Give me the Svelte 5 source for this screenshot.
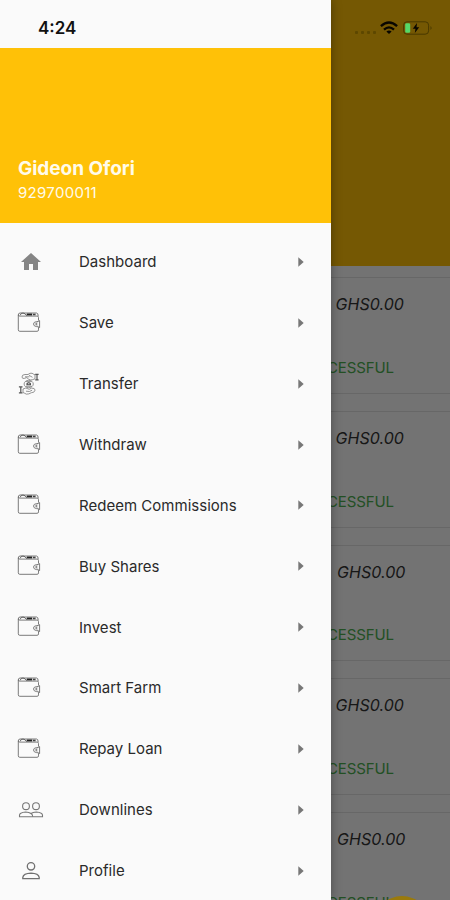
<script lang="ts">
	interface MenuItem {
		label: string;
		icon: 'home' | 'wallet' | 'transfer' | 'people' | 'person';
	}

	const user = { name: 'Gideon Ofori', phone: '929700011' };

	const items: MenuItem[] = [
		{ label: 'Dashboard', icon: 'home' },
		{ label: 'Save', icon: 'wallet' },
		{ label: 'Transfer', icon: 'transfer' },
		{ label: 'Withdraw', icon: 'wallet' },
		{ label: 'Redeem Commissions', icon: 'wallet' },
		{ label: 'Buy Shares', icon: 'wallet' },
		{ label: 'Invest', icon: 'wallet' },
		{ label: 'Smart Farm', icon: 'wallet' },
		{ label: 'Repay Loan', icon: 'wallet' },
		{ label: 'Downlines', icon: 'people' },
		{ label: 'Profile', icon: 'person' }
	];

	const transactions = [
		{ amount: 'GHS0.00', status: 'SUCCESSFUL', wide: false },
		{ amount: 'GHS0.00', status: 'SUCCESSFUL', wide: false },
		{ amount: 'GHS0.00', status: 'SUCCESSFUL', wide: true },
		{ amount: 'GHS0.00', status: 'SUCCESSFUL', wide: false },
		{ amount: 'GHS0.00', status: 'SUCCESSFUL', wide: true }
	];
</script>

<div class="screen">
	<main class="page">
		<div class="hero"></div>
		<div class="transactions">
			{#each transactions as tx}
				<div class="transaction">
					<span class="amount" class:wide={tx.wide}>{tx.amount}</span>
					<span class="status">{tx.status}</span>
				</div>
			{/each}
		</div>
	</main>

	<div class="scrim"></div>
	<div class="fab"></div>

	<aside class="drawer">
		<div class="drawer-header">
			<h2 class="user-name">{user.name}</h2>
			<p class="user-phone">{user.phone}</p>
		</div>
		<nav class="menu">
			{#each items as item}
				<div class="menu-item">
					<span class="icon">
						{#if item.icon === 'home'}
							<svg class="home" width="24" height="24" viewBox="0 0 24 24">
								<path d="M10 20v-6h4v6h5v-8h3L12 3 2 12h3v8z" fill="#858585" />
							</svg>
						{:else if item.icon === 'wallet'}
							<svg class="wallet" width="26" height="24" viewBox="0 0 26 24" fill="none" stroke="#6c6c6c" stroke-width="0.9">
								<path d="M21.5 9.6V6.5q0-1.4-1.4-1.4H2.5Q1.3 5.1 1.3 3.9V18.8q0 1.5 1.5 1.5h17.3q1.4 0 1.4-1.4v-2.7" />
								<path d="M1.3 4.2Q1.3 2 3 2h16.6q1.6 0 1.6 3.2" />
								<path d="M3 4.4Q4.2 1 7 2.2l3 2.4" stroke="#555" />
								<path d="M9.8 3.5h5.4" stroke="#222" stroke-width="1.9" />
								<path d="M16 3.5h2.6" stroke="#444" stroke-width="1.6" />
								<path d="M22.6 9.6q-1 1.1-3 1-3 .3-3.1 2.4.1 2.3 3.1 2.6 2-.1 3 1z" fill="#fafafa" />
								<path d="M20.4 12q-1.6-.2-1.6 1t1.6 1" stroke="#555" />
							</svg>
						{:else if item.icon === 'transfer'}
							<svg class="transfer" width="24" height="24" viewBox="0 0 24 24" fill="none" stroke="#7a7a7a" stroke-width="0.8">
								<path d="M5 5q0-2.5 3-2.5h3l2-1.2q2.2-.6 3.8 1l1.2.5v4l-2.8 1q-2 .7-3.8-.8l-1.6-1.4-2.6.8Q5.3 7 5 5z" />
								<path d="M8 4.8h4.5M12 3.3l3.5 2" />
								<path d="M18.2 2.3h3.4M20 2.3v5.6M18.2 7.9h3.4" stroke="#555" stroke-width="1.2" />
								<ellipse cx="11.7" cy="12" rx="4.6" ry="3.7" />
								<path d="M8.5 9.6h6M8.8 14.3h6" />
								<path d="M10 12.8v-1.2q1.7-1.8 3.4 0v1.2z" stroke="#444" stroke-width="1.1" />
								<path d="M6 17l2.8-1 3.4 1.3 2.4-1.2q3.3-.2 3.5 2-.7 2.8-3.7 2.6l-2.6 1.2q-2.8.8-4.3-.7L6 20.5z" />
								<path d="M9 19.2l3.4.3 2.7-1.3" />
								<path d="M1.9 14.8h3.6M3.8 14.8v6M1.9 20.8h3.6" stroke="#555" stroke-width="1.2" />
							</svg>
						{:else if item.icon === 'people'}
							<svg class="people" width="26" height="24" viewBox="0 0 26 24" fill="none" stroke="#777" stroke-width="1.1">
								<circle cx="8" cy="8.2" r="3.4" />
								<circle cx="18" cy="8.2" r="3.4" />
								<path d="M1.5 18.7v-1.5q0-2.7 6.2-3.2 3.5.2 5.3 1.5 1.8-1.3 5.3-1.5 6.2.5 6.2 3.2v1.5z" />
								<path d="M13 15.5q1.7.8 1.7 3.2" />
							</svg>
						{:else}
							<svg class="person" width="24" height="24" viewBox="0 0 24 24" fill="none" stroke="#707070" stroke-width="1.3">
								<circle cx="12" cy="7.3" r="3.7" />
								<path d="M3.8 19.6v-1.2q.6-4 8.2-4.3 7.6.3 8.2 4.3v1.2z" />
							</svg>
						{/if}
					</span>
					<span class="label">{item.label}</span>
					<svg class="arrow" width="6" height="10" viewBox="0 0 6 10">
						<path d="M.3.3 5.7 5 .3 9.7z" fill="#777" />
					</svg>
				</div>
			{/each}
		</nav>
	</aside>

	<header class="status-bar">
		<span class="time">4:24</span>
		<span class="indicators">
			<span class="signal"><i></i><i></i><i></i><i></i></span>
			<svg class="wifi" width="18" height="14" viewBox="0 0 18 14" fill="none" stroke="#080600" stroke-width="2.3">
				<path d="M.9 5.2q8.1-7.4 16.2 0" />
				<path d="M4 8.6q5-4.5 10 0" />
				<path d="M6.4 10.4Q9 8.4 11.6 10.4L9 13z" fill="#080600" stroke="none" />
			</svg>
			<svg class="battery" width="30" height="14" viewBox="0 0 30 14">
				<rect x=".6" y=".8" width="25" height="12.4" rx="3.4" fill="none" stroke="#493900" />
				<path d="M27.5 5q2.2 2 0 4z" fill="#493900" />
				<rect x="2.2" y="2.2" width="5" height="9.6" rx="1.3" fill="#55d968" />
				<path d="M14 2 9.8 7.7h2.7L11.8 12 16.2 6.3h-2.7z" fill="#080600" />
			</svg>
		</span>
	</header>
</div>

<style>
	:global(body) {
		margin: 0;
	}

	.screen {
		position: relative;
		width: 450px;
		height: 900px;
		overflow: hidden;
		background: #fafafa;
		font-family: Inter, Roboto, sans-serif;
	}

	.hero {
		height: 266px;
		background: #ffc107;
	}

	.transactions {
		display: flex;
		flex-direction: column;
		gap: 17px;
		padding: 11px 0 0 12px;
	}

	.transaction {
		box-sizing: border-box;
		flex: none;
		height: 116.8px;
		display: flex;
		flex-direction: column;
		align-items: flex-end;
		justify-content: space-between;
		padding: 16px 56px 15px 0;
		border: 1px solid #e0e0e0;
		border-right: 0;
		font-size: 16px;
		line-height: 20px;
	}

	.amount {
		margin-right: -10px;
		font-style: italic;
		color: #333;
		letter-spacing: 0.05px;
	}

	.amount.wide {
		margin-right: -11.5px;
	}

	.status {
		font-size: 15px;
		letter-spacing: -0.1px;
		color: #4caf50;
	}

	.scrim {
		position: absolute;
		inset: 0;
		background: rgba(0, 0, 0, 0.54);
	}

	.fab {
		position: absolute;
		left: 374px;
		top: 896px;
		width: 56px;
		height: 56px;
		border-radius: 50%;
		background: #9a7a0c;
	}

	.drawer {
		position: absolute;
		top: 0;
		left: 0;
		box-sizing: border-box;
		width: 331px;
		height: 900px;
		padding-top: 48px;
		overflow: hidden;
		background: #fafafa;
		box-shadow: 0 0 10px rgba(0, 0, 0, 0.35);
	}

	.drawer-header {
		box-sizing: border-box;
		height: 175px;
		display: flex;
		flex-direction: column;
		justify-content: flex-end;
		padding: 0 18px 18px;
		background: #ffc107;
		color: #fffbea;
	}

	.user-name {
		margin: 0;
		font-size: 19px;
		font-weight: 700;
		line-height: 24px;
		letter-spacing: -0.03px;
	}

	.user-phone {
		margin: 0;
		font-size: 15px;
		line-height: 24px;
		letter-spacing: 0.3px;
	}

	.menu {
		padding-top: 8.5px;
	}

	.menu-item {
		height: 60.87px;
		display: flex;
		align-items: center;
		padding: 0 27px 0 17px;
	}

	.icon {
		width: 62px;
		display: flex;
	}

	.home,
	.person {
		margin-left: 2px;
	}

	.people {
		margin-left: 1px;
	}

	.label {
		flex: 1;
		font-size: 15px;
		color: #2a2a2a;
		letter-spacing: 0.02px;
	}

	.status-bar {
		position: absolute;
		top: 0;
		left: 0;
		box-sizing: border-box;
		width: 450px;
		height: 55px;
		display: flex;
		align-items: center;
		justify-content: space-between;
		padding: 0 17px 0 38px;
	}

	.time {
		font-size: 17px;
		font-weight: 600;
		color: #111;
	}

	.indicators {
		display: flex;
		align-items: center;
	}

	.signal {
		display: flex;
		gap: 3px;
		margin: 9px 4px 0 0;
	}

	.signal i {
		width: 3px;
		height: 3px;
		border-radius: 1px;
		background: #5d4700;
	}

	.wifi {
		margin-right: 5px;
	}
</style>
